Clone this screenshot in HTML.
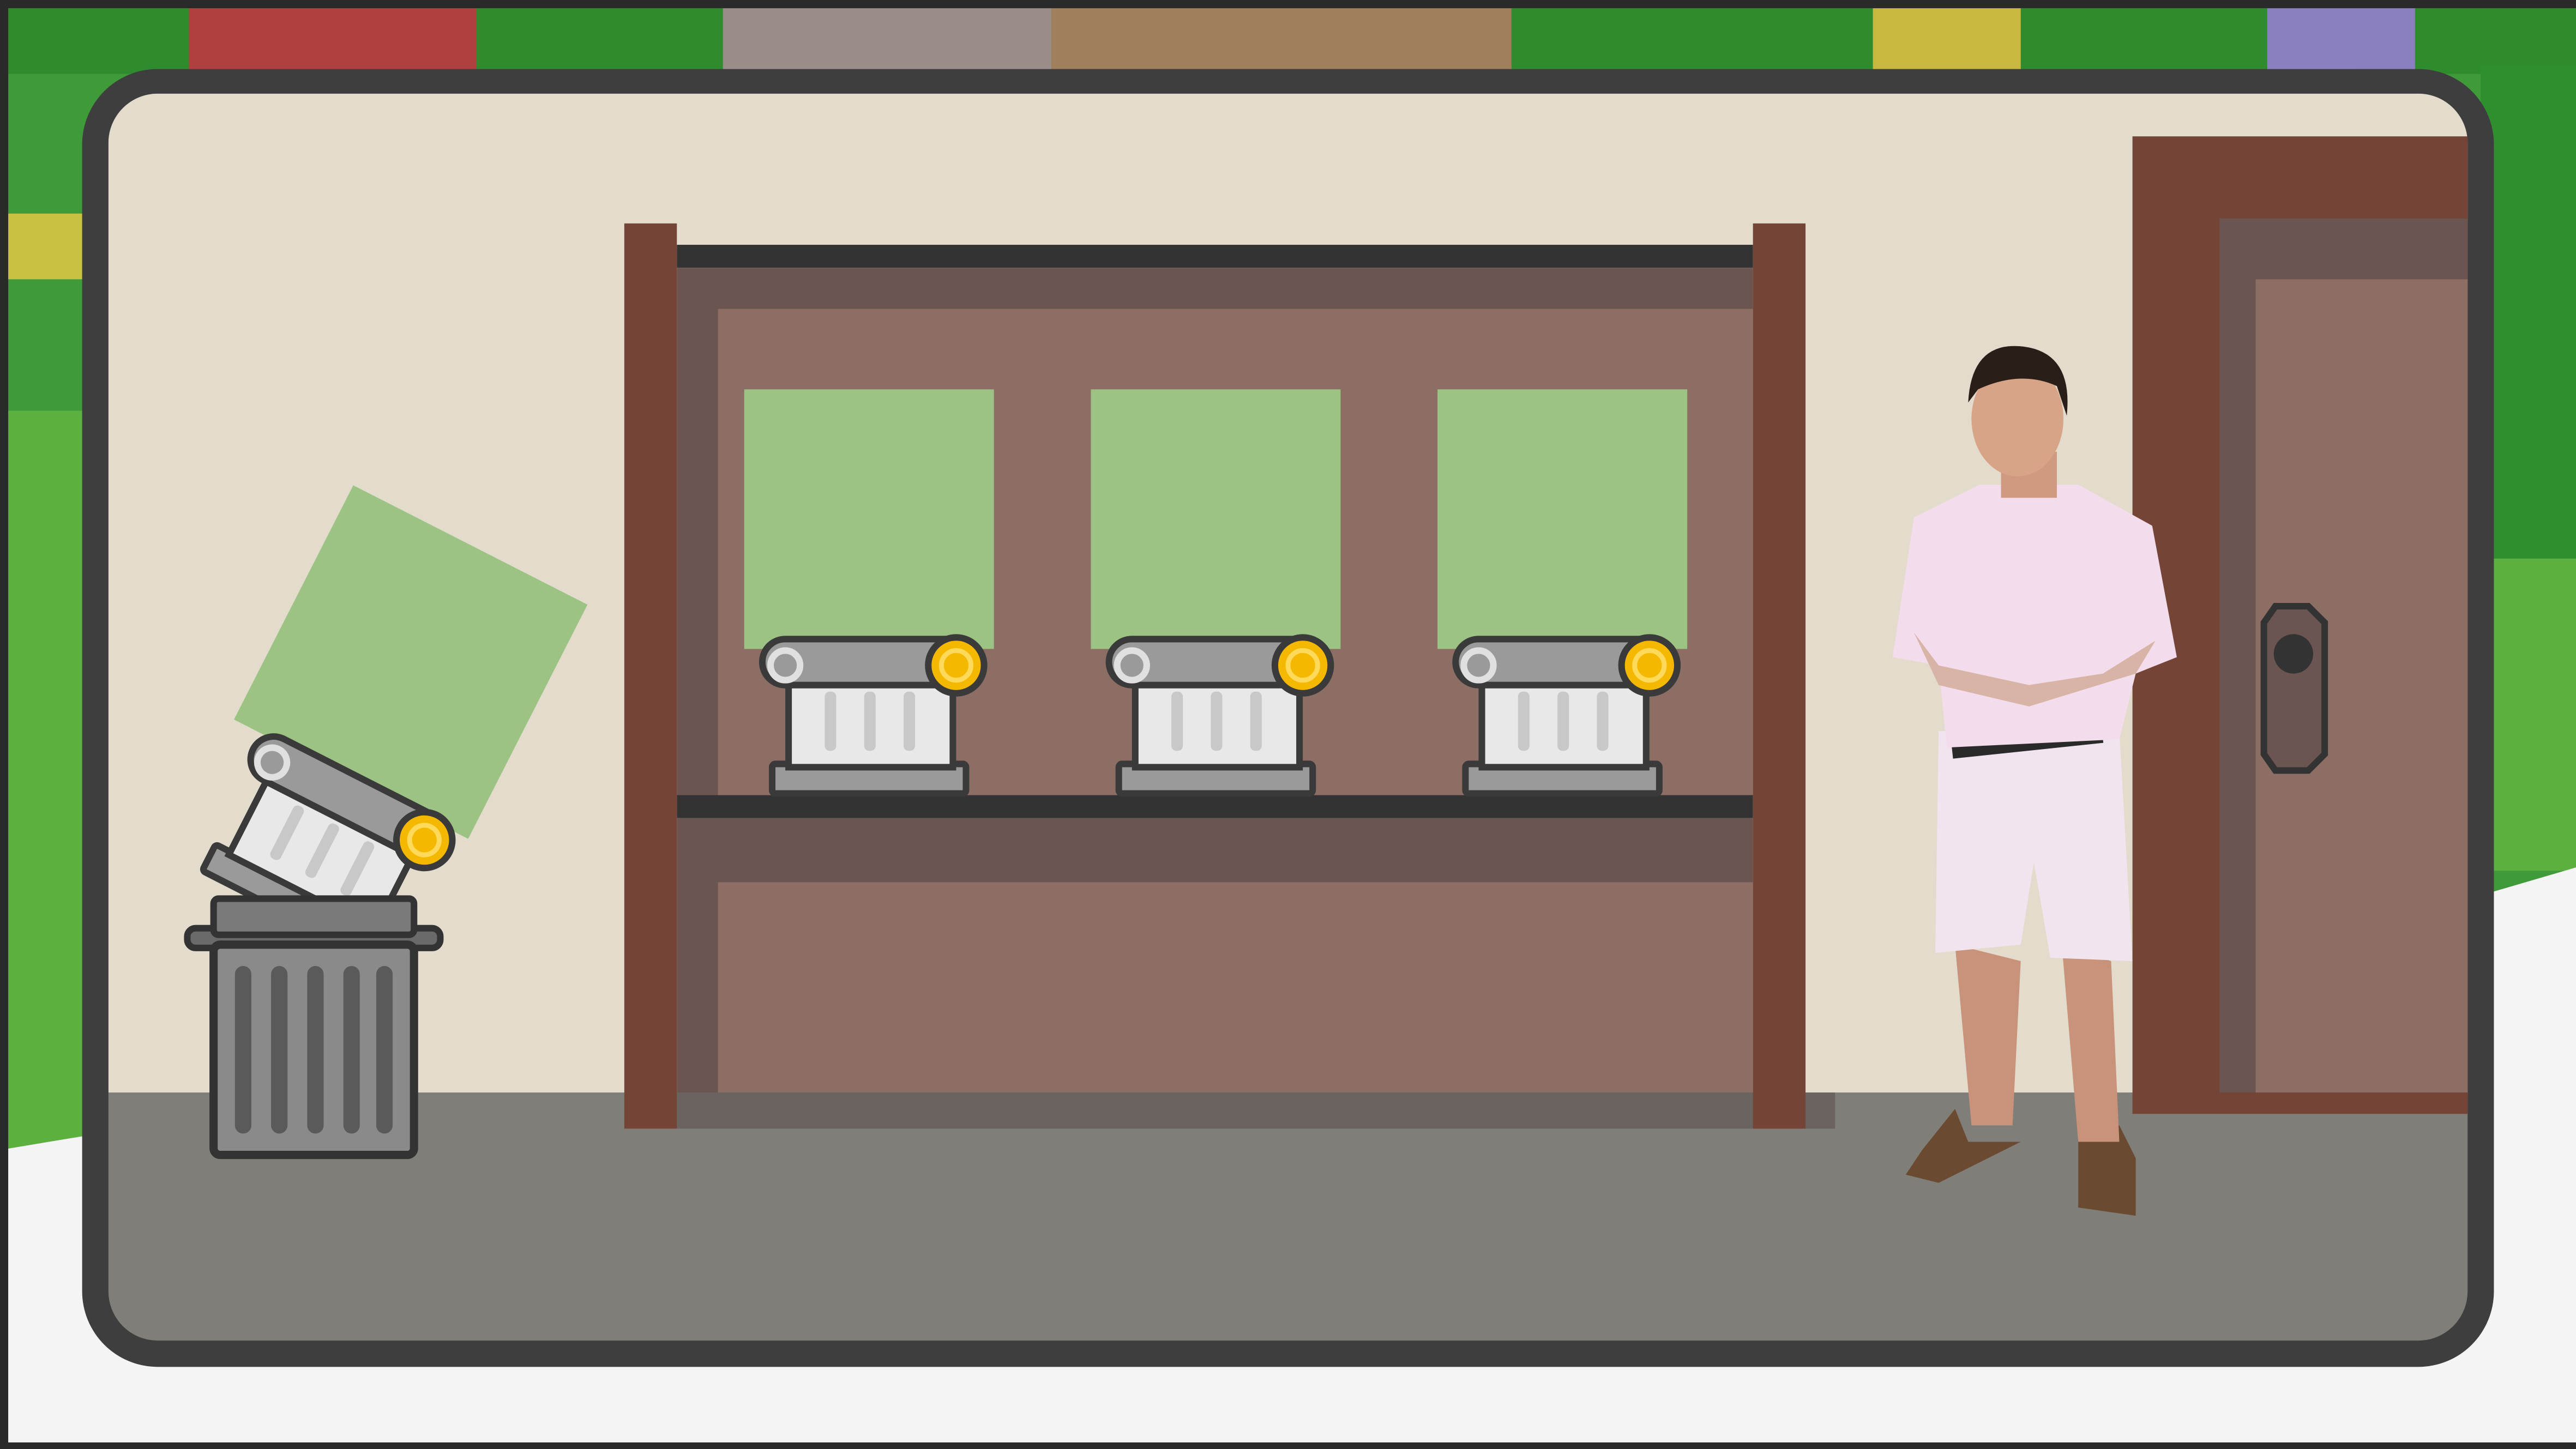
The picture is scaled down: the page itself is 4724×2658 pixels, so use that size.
<!DOCTYPE html>
<html><head><meta charset="utf-8"><style>
html,body{margin:0;padding:0;width:4724px;height:2658px;overflow:hidden;background:#f3f3f3}
#s{position:absolute;left:0;top:0;width:1568px;height:882px;transform:scale(3.0128,3.0136);transform-origin:0 0;overflow:hidden;background:#f3f4f3}
.a{position:absolute}
svg{overflow:visible}
</style></head><body><div id="s">
<div class="a" style="left:0;top:0;width:1568px;height:700px;background:#3f9a3a"></div>
<div class="a" style="left:0;top:0;width:1568px;height:45px;background:#2e8b2e"></div>
<div class="a" style="left:115px;top:5px;width:175px;height:40px;background:#b04040"></div>
<div class="a" style="left:440px;top:5px;width:200px;height:40px;background:#9a8c88"></div>
<div class="a" style="left:640px;top:5px;width:280px;height:40px;background:#a0805a"></div>
<div class="a" style="left:1140px;top:5px;width:90px;height:40px;background:#c8b840"></div>
<div class="a" style="left:1380px;top:5px;width:90px;height:40px;background:#8a80c0"></div>
<div class="a" style="left:0;top:130px;width:60px;height:40px;background:#c8c040"></div>
<div class="a" style="left:0;top:250px;width:60px;height:450px;background:#5cb040"></div>
<div class="a" style="left:1510px;top:40px;width:58px;height:300px;background:#2f8f2f"></div>
<div class="a" style="left:1510px;top:340px;width:58px;height:190px;background:#5cb040"></div>
<svg class="a" style="left:0;top:0" width="1568" height="882"><path d="M0 700 L60 690 L1510 690 L1510 545 L1568 528 L1568 882 L0 882Z" fill="#f3f4f3"/></svg>
<div class="a" style="left:0;top:0;width:1568px;height:5px;background:#2a2a2a"></div>
<div class="a" style="left:0;top:0;width:5px;height:882px;background:#2a2a2a"></div>
<div class="a" style="left:0;top:878px;width:1568px;height:4px;background:#2a2a2a"></div>
<div class="a" style="left:50px;top:42px;width:1468px;height:790px;background:#3e3e3e;border-radius:46px"></div>
<div class="a" style="left:66px;top:57px;width:1436px;height:759px;border-radius:30px;overflow:hidden;background:#807e78">
 <div class="a" style="left:0;top:0;width:1436px;height:608px;background:#e3dccd"></div>
</div>
<div class="a" style="left:412px;top:149px;width:655px;height:14px;background:#333"></div>
<div class="a" style="left:412px;top:163px;width:655px;height:322px;background:#6b5550"></div>
<div class="a" style="left:437px;top:188px;width:630px;height:297px;background:#8d6e65"></div>
<div class="a" style="left:412px;top:484px;width:655px;height:14px;background:#333"></div>
<div class="a" style="left:412px;top:498px;width:655px;height:167px;background:#6b5550"></div>
<div class="a" style="left:437px;top:537px;width:630px;height:128px;background:#8d6e65"></div>
<div class="a" style="left:412px;top:665px;width:705px;height:22px;background:#6a6360"></div>
<div class="a" style="left:380px;top:136px;width:32px;height:551px;background:#744537"></div>
<div class="a" style="left:1067px;top:136px;width:32px;height:551px;background:#744537"></div>
<div class="a" style="left:453px;top:237px;width:152px;height:158px;background:#9dc384"></div>
<div class="a" style="left:664px;top:237px;width:152px;height:158px;background:#9dc384"></div>
<div class="a" style="left:875px;top:237px;width:152px;height:158px;background:#9dc384"></div>
<svg width="0" height="0" style="position:absolute"><defs>
<g id="col">
 <rect x="12" y="78" width="118" height="18" rx="2" fill="#9a9a9a" stroke="#3a3a3a" stroke-width="4"/>
 <rect x="22" y="28" width="100" height="52" fill="#e8e8e8" stroke="#3a3a3a" stroke-width="4"/>
 <rect x="44" y="34" width="7" height="36" rx="3" fill="#c8c8c8"/><rect x="68" y="34" width="7" height="36" rx="3" fill="#c8c8c8"/><rect x="92" y="34" width="7" height="36" rx="3" fill="#c8c8c8"/>
 <path d="M20 2 H125 V30 H20 A14 14 0 0 1 20 2Z" fill="#9a9a9a" stroke="#3a3a3a" stroke-width="4"/>
 <circle cx="20" cy="18" r="9" fill="none" stroke="#e0e0e0" stroke-width="4"/>
 <circle cx="124" cy="18" r="17" fill="#f5b800" stroke="#3a3a3a" stroke-width="4"/>
 <circle cx="124" cy="18" r="9" fill="none" stroke="#ffd95a" stroke-width="3"/>
</g></defs></svg>
<svg class="a" style="left:458px;top:387px" width="150" height="100"><use href="#col"/></svg>
<svg class="a" style="left:669px;top:387px" width="150" height="100"><use href="#col"/></svg>
<svg class="a" style="left:880px;top:387px" width="150" height="100"><use href="#col"/></svg>
<div class="a" style="left:170px;top:323px;width:160px;height:160px;background:#9dc384;transform:rotate(27deg)"></div>
<svg class="a" style="left:110px;top:400px" width="180" height="310">
 <g transform="translate(46,39) rotate(27)"><use href="#col"/></g>
 <rect x="4" y="165" width="154" height="12" rx="5" fill="#6a6a6a" stroke="#333" stroke-width="4"/>
 <rect x="20" y="147" width="122" height="22" rx="3" fill="#7a7a7a" stroke="#333" stroke-width="4"/>
 <rect x="20" y="175" width="122" height="128" rx="4" fill="#8a8a8a" stroke="#333" stroke-width="5"/>
 <g fill="#5a5a5a"><rect x="33" y="188" width="10" height="102" rx="5"/><rect x="55" y="188" width="10" height="102" rx="5"/><rect x="77" y="188" width="10" height="102" rx="5"/><rect x="99" y="188" width="10" height="102" rx="5"/><rect x="119" y="188" width="10" height="102" rx="5"/></g>
</svg>
<div class="a" style="left:1298px;top:83px;width:204px;height:595px;background:#744537"></div>
<div class="a" style="left:1351px;top:133px;width:151px;height:532px;background:#6b5550"></div>
<div class="a" style="left:1373px;top:170px;width:129px;height:495px;background:#8d6e65"></div>
<svg class="a" style="left:1375px;top:366px" width="44" height="108"><path d="M10 3 H30 L40 13 V93 L30 103 H10 L3 93 V13Z" fill="#6b5550" stroke="#333" stroke-width="4"/><circle cx="21" cy="32" r="12" fill="#333"/></svg>
<svg class="a" style="left:1140px;top:205px" width="200" height="545">
 <path d="M58 490 L50 470 L30 495 L20 510 L40 515 L90 490Z" fill="#6a4a30"/>
 <path d="M125 480 L125 530 L160 535 L160 500 L150 480Z" fill="#6a4a30"/>
 <path d="M50 370 L60 480 L85 480 L90 380Z" fill="#c9927a"/>
 <path d="M115 370 L125 490 L150 490 L145 380Z" fill="#c9927a"/>
 <path d="M40 240 L150 240 L158 380 L108 378 L98 320 L90 370 L38 375Z" fill="#f0e4ee"/>
 <rect x="48" y="242" width="92" height="10" fill="#2a2a2a" transform="rotate(-6 94 247)"/>
 <path d="M65 90 L125 90 L170 115 L185 195 L160 205 L150 245 L45 250 L40 200 L12 195 L25 110Z" fill="#f3dcec"/>
 <path d="M25 180 L40 200 L95 212 L140 205 L172 185 L160 205 L95 225 L40 212Z" fill="#d8b4a6"/>
 <rect x="78" y="70" width="34" height="28" fill="#d09a80"/>
 <ellipse cx="88" cy="50" rx="28" ry="35" fill="#d8a488"/>
 <path d="M58 40 Q60 2 92 6 Q122 10 118 48 L112 30 Q90 20 64 32Z" fill="#2a1e18"/>
</svg>
</div></body></html>
